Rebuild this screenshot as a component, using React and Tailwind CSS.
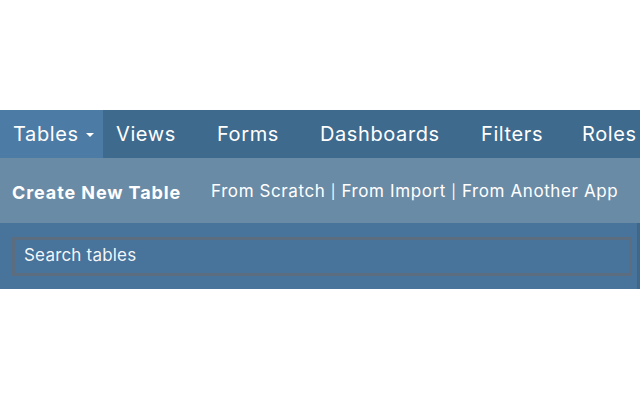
export default function App() {
  const tabs = [
    { label: 'Tables', w: 'w-[103px]', active: true },
    { label: 'Views', w: 'w-[101px]' },
    { label: 'Forms', w: 'w-[103px]' },
    { label: 'Dashboards', w: 'w-[161px]' },
    { label: 'Filters', w: 'w-[101px]' },
    { label: 'Roles', w: 'w-[71px]' },
  ];

  return (
    <div className="w-[640px] h-[400px] bg-white overflow-hidden font-['Inter',sans-serif]">
      <div className="h-[110px]" />

      {/* Main nav */}
      <nav className="h-[48px] flex bg-[#3e6a8d] text-white">
        {tabs.map((t) => (
          <div
            key={t.label}
            className={`${t.w} shrink-0 h-full flex items-center pl-[13px] text-[20px] tracking-[0.6px] ${
              t.active ? 'bg-[#4c7ca5]' : ''
            }`}
          >
            {t.label}
            {t.active && (
              <span className="ml-[7px] inline-block w-0 h-0 border-l-[4px] border-r-[4px] border-t-[4px] border-l-transparent border-r-transparent border-t-white mt-[2px]" />
            )}
          </div>
        ))}
      </nav>

      {/* Create bar */}
      <div className="h-[65px] flex items-center bg-[#6a8ba6] text-white">
        <span className="pl-[12px] w-[211px] shrink-0 text-[18px] font-bold tracking-[0.9px] mt-[3px]">
          Create New Table
        </span>
        <span className="text-[17px] tracking-[0.6px] whitespace-nowrap mt-[2px]">
          From Scratch <span className="text-[14px]">|</span> From Import <span className="text-[14px]">|</span> From Another App
        </span>
      </div>

      {/* Search */}
      <div className="h-[66px] bg-[#48739a] pl-[12px] pr-[5px] flex items-center border-r-[3px] border-[#3f6789]">
        <div className="w-full h-[39px] border-[3px] border-[#5c6d80] flex items-center pl-[9px] text-[17px] tracking-[0.2px] text-white/95">
          Search tables
        </div>
      </div>
    </div>
  );
}
